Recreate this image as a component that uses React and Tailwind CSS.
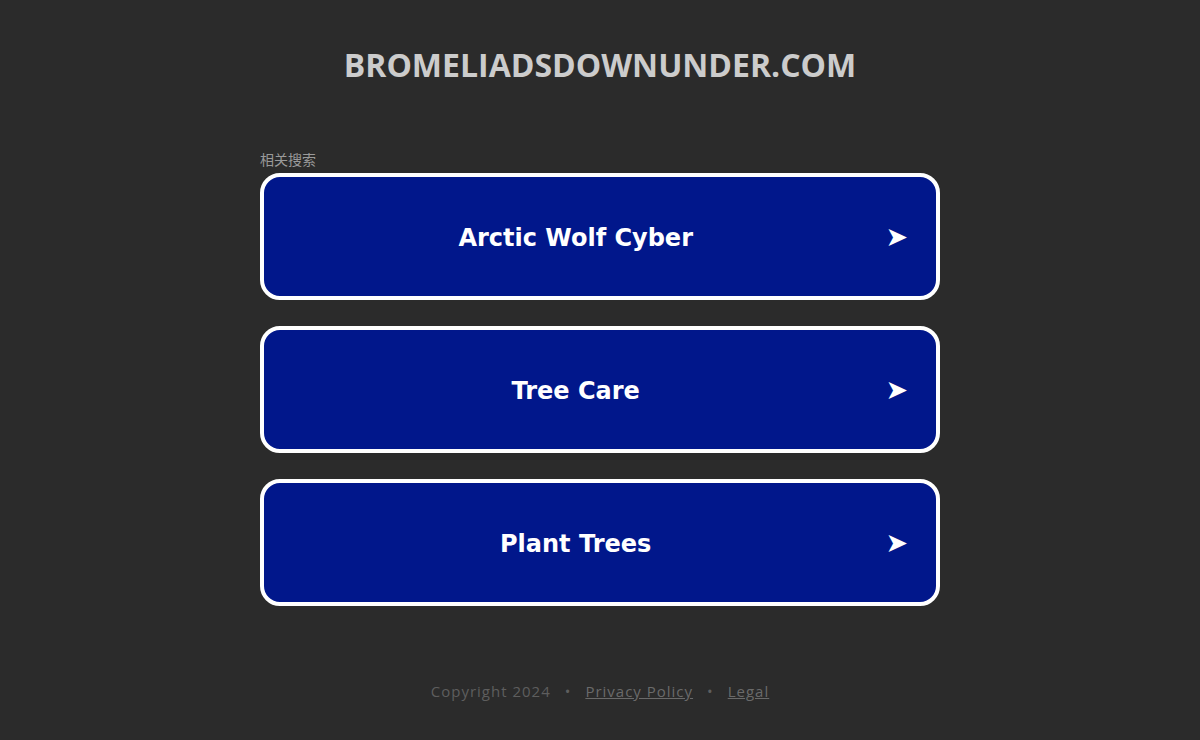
export default function App() {
  const items = ["Arctic Wolf Cyber", "Tree Care", "Plant Trees"];
  return (
    <div className="min-h-[740px] w-full bg-[#2b2b2b] flex flex-col items-center" style={{ fontFamily: "'Open Sans', sans-serif" }}>
      <h1 className="mt-[44px] h-[42px] leading-[42px] text-[32px] font-bold text-[#cccccc]">BROMELIADSDOWNUNDER.COM</h1>
      <div className="mt-[64px] w-[680px] flex flex-col">
        <div className="text-[14px] leading-[18px] text-[#9a9a9a] h-[18px] mb-[5px]" style={{ fontFamily: "'Noto Sans CJK SC', sans-serif" }}>相关搜索</div>
        <div className="flex flex-col gap-[26px]">
          {items.map((t) => (
            <a key={t} href="#" className="h-[127px] rounded-[20px] border-4 border-white bg-[#01178b] flex items-center pl-[2px] pr-[28px]">
              <span className="flex-1 text-center text-white text-[24px] leading-[30px] pt-[2px] font-bold" style={{ fontFamily: "'DejaVu Sans', Verdana, sans-serif" }}>{t}</span>
              <span className="text-white text-[27px] leading-none" style={{ fontFamily: "'DejaVu Sans', sans-serif" }}>➤</span>
            </a>
          ))}
        </div>
      </div>
      <div className="mt-[74px] text-[15px] text-[#5e5e5e] tracking-[1px] flex items-center gap-[14px]">
        <span>Copyright 2024</span>
        <span>•</span>
        <a href="#" className="underline text-[#6a6a6a]">Privacy Policy</a>
        <span>•</span>
        <a href="#" className="underline text-[#6a6a6a]">Legal</a>
      </div>
    </div>
  );
}
